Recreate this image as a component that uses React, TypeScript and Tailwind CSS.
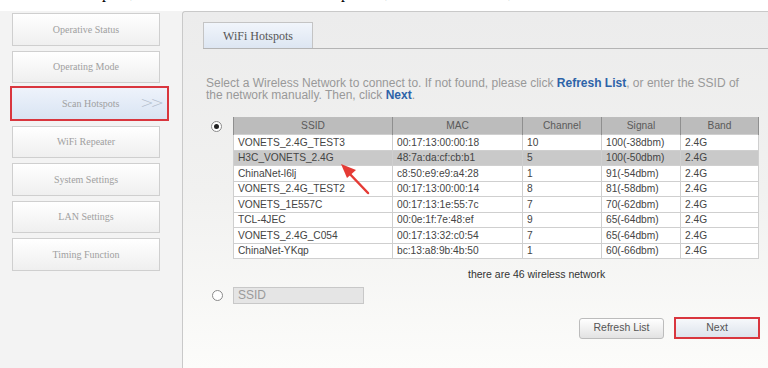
import React from "react";

const menu = [
  "Operative Status",
  "Operating Mode",
  "Scan Hotspots",
  "WiFi Repeater",
  "System Settings",
  "LAN Settings",
  "Timing Function",
];

const rows = [
  ["VONETS_2.4G_TEST3", "00:17:13:00:00:18", "10", "100(-38dbm)", "2.4G"],
  ["H3C_VONETS_2.4G", "48:7a:da:cf:cb:b1", "5", "100(-50dbm)", "2.4G"],
  ["ChinaNet-l6lj", "c8:50:e9:e9:a4:28", "1", "91(-54dbm)", "2.4G"],
  ["VONETS_2.4G_TEST2", "00:17:13:00:00:14", "8", "81(-58dbm)", "2.4G"],
  ["VONETS_1E557C", "00:17:13:1e:55:7c", "7", "70(-62dbm)", "2.4G"],
  ["TCL-4JEC", "00:0e:1f:7e:48:ef", "9", "65(-64dbm)", "2.4G"],
  ["VONETS_2.4G_C054", "00:17:13:32:c0:54", "7", "65(-64dbm)", "2.4G"],
  ["ChinaNet-YKqp", "bc:13:a8:9b:4b:50", "1", "60(-66dbm)", "2.4G"],
];

const colWidths = ["w-[159px]", "w-[130px]", "w-[79px]", "w-[79px]", "w-[78px]"];
const headers = ["SSID", "MAC", "Channel", "Signal", "Band"];

function Radio({ checked }: { checked?: boolean }) {
  return (
    <div className="w-[11px] h-[11px] rounded-full border border-[#8a8a8a] bg-white flex items-center justify-center">
      {checked && <div className="w-[5px] h-[5px] rounded-full bg-[#222]" />}
    </div>
  );
}

function SideButton({ label }: { label: string }) {
  return (
    <div className="ml-[12px] w-[148px] h-[32.5px] border border-[#cfcfcf] bg-gradient-to-b from-white to-[#efefef] flex items-center justify-center text-[10px] text-[#a0a0a0] font-['Liberation_Serif',serif]">
      {label}
    </div>
  );
}

export default function App() {
  return (
    <div className="relative w-[768px] h-[368px] overflow-hidden bg-white font-['Liberation_Sans',Arial,sans-serif]">
      {/* descenders of the caption line above the screenshot */}
      <div className="h-[11px]">
        <div className="h-[4px] overflow-hidden">
          <div className="-mt-[15px] flex text-[16px] leading-[16px] text-black font-['Liberation_Serif',serif]">
            <span className="ml-[102px]">p</span>
            <span className="ml-[20px]">,</span>
            <span className="ml-[207px]">p</span>
            <span className="ml-[36px]">,</span>
            <span className="ml-[119px]">,</span>
          </div>
        </div>
      </div>

      <div className="flex h-[357px]">
        {/* sidebar */}
        <div className="w-[182px] bg-[#f3f3f3] pt-[2px] flex flex-col gap-[5px]">
          {menu.map((m) =>
            m === "Scan Hotspots" ? (
              <div
                key={m}
                className="-mt-[2px] ml-[10px] w-[159px] h-[34.5px] border-2 border-[#d9363e]"
              >
                <div className="w-[155px] h-full bg-gradient-to-b from-[#eef3fb] to-[#d9e4f3] flex items-center text-[10px] text-[#a0a0a0] font-['Liberation_Serif',serif]">
                  <span className="ml-[50px]">Scan Hotspots</span>
                  <span className="ml-auto mr-[6px] text-[16px] leading-none text-[#b2bccb] font-['DejaVu_Sans',sans-serif] font-extralight tracking-[-3px]">
                    &gt;&gt;
                  </span>
                </div>
              </div>
            ) : (
              <SideButton key={m} label={m} />
            )
          )}
        </div>

        {/* main panel */}
        <div className="flex-1 border-l border-t border-[#c9c9c9] rounded-tl-[3px] bg-gradient-to-b from-[#ececec] via-[#f1f1f0] to-[#fcfcfa]">
          <div className="mt-[10px] ml-[20px] flex items-end border-b border-[#b4b4b4] h-[27px]">
            <div className="w-[110px] h-[26px] border border-b-0 border-[#c4c4c4] bg-gradient-to-b from-[#f1f5fb] to-[#dde6f2] flex items-center justify-center text-[12px] text-[#555] font-['Liberation_Serif',serif]">
              WiFi Hotspots
            </div>
          </div>

          <p className="mt-[28px] ml-[23px] w-[548px] text-[12px] leading-[12px] text-[#999]">
            Select a Wireless Network to connect to. If not found, please click{" "}
            <b className="text-[#2d63a8]">Refresh List</b>, or enter the SSID of the network
            manually. Then, click <b className="text-[#2d63a8]">Next</b>.
          </p>

          <div className="mt-[16px] flex">
            <div className="w-[50px] pl-[28px] pt-[4px]">
              <Radio checked />
            </div>
            <table className="border-collapse border border-[#bdbdbd] text-[10.2px] text-[#444]">
              <thead>
                <tr className="bg-[#bcbcbc] h-[17px]">
                  {headers.map((h, i) => (
                    <th
                      key={h}
                      className={`${colWidths[i]} border-x border-[#8f8f8f] font-normal text-[#5a5a5a] text-center p-0`}
                    >
                      {h}
                    </th>
                  ))}
                </tr>
              </thead>
              <tbody>
                {rows.map((r, ri) => (
                  <tr key={ri} className={`h-[15.5px] ${ri === 1 ? "bg-[#c9c9c9]" : "bg-white"}`}>
                    {r.map((c, ci) => (
                      <td
                        key={ci}
                        className={`${colWidths[ci]} border border-[#cfcfcf] pl-[4px] py-0 leading-[13px]`}
                      >
                        {c}
                      </td>
                    ))}
                  </tr>
                ))}
              </tbody>
            </table>
          </div>

          <div className="mt-[8px] ml-[285px] text-[10.5px] leading-[14px] text-[#333]">
            there are 46 wireless network
          </div>

          <div className="mt-[6px] flex items-center">
            <div className="w-[50px] pl-[29px]">
              <Radio />
            </div>
            <div className="w-[131px] h-[17px] bg-[#e5e5e5] border border-[#c8c8c8] pl-[4px] text-[12px] leading-[15px] text-[#9a9a9a]">
              SSID
            </div>
          </div>

          <div className="mt-[13px] flex items-center">
            <div className="ml-[396px] w-[85px] h-[21px] rounded-[3px] border border-[#bcbcbc] bg-gradient-to-b from-white to-[#e2e2e2] flex items-center justify-center text-[10.5px] text-[#555]">
              Refresh List
            </div>
            <div className="ml-[10px] w-[86px] h-[22px] border-2 border-[#d9363e] p-0">
              <div className="w-full h-full bg-gradient-to-b from-[#f6f8fb] to-[#dde3ec] flex items-center justify-center text-[10.5px] text-[#555]">
                Next
              </div>
            </div>
          </div>
        </div>
      </div>

      {/* red pointer arrow */}
      <svg className="absolute left-[335px] top-[158px]" width="40" height="40" viewBox="0 0 40 40">
        <line x1="33" y1="35" x2="12" y2="13" stroke="#e53b35" strokeWidth="2.5" strokeLinecap="round" />
        <polygon points="6,6 21,12 12,20" fill="#e53b35" />
      </svg>
    </div>
  );
}
